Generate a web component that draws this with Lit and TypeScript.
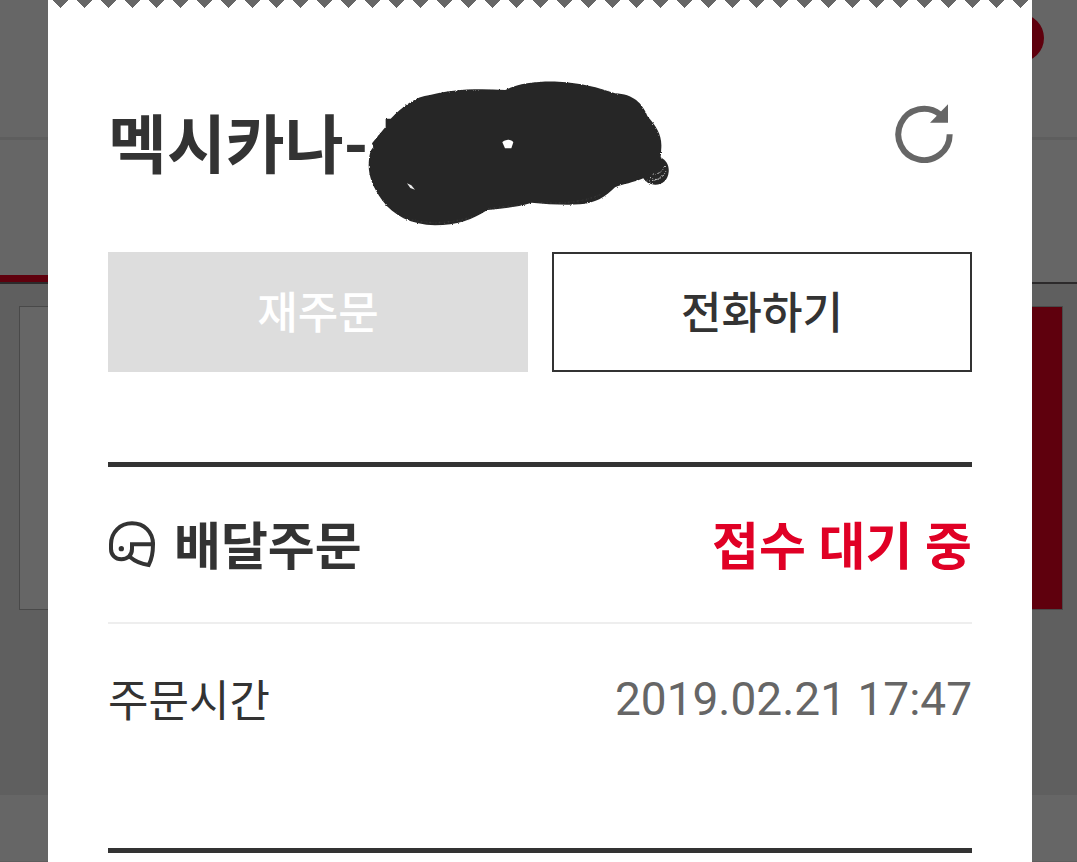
import { LitElement, html, css } from "lit";
import { customElement } from "lit/decorators.js";

/** Dimmed store page that stays visible behind the order sheet. */
@customElement("store-page")
class StorePage extends LitElement {
  static styles = css`
    :host {
      display: flex;
      flex-direction: column;
      background: #666;
      overflow: hidden;
    }
    .header {
      display: flex;
      justify-content: flex-end;
      height: 123px;
      padding: 14px 33px 0 0;
      border-bottom: 3px solid #5e5e5e;
    }
    .badge {
      width: 48px;
      height: 48px;
      border-radius: 50%;
      background: #5f000d;
    }
    .tabs {
      display: grid;
      grid-template-columns: 1fr 1fr;
      height: 142px;
      border-bottom: 2px solid #2c2a2b;
    }
    .tab.active {
      border-bottom: 7px solid #5f000d;
    }
    .content {
      padding: 22px 14px 185px 19px;
      background: #5f5f5f;
    }
    .card {
      display: grid;
      grid-template-columns: 3fr 1fr;
      height: 302px;
      border: 1px solid #494949;
      background: #666;
    }
    .action {
      background: #5f000d;
    }
    .footer {
      flex: 1;
      min-height: 66px;
      border-bottom: 1px solid #5e5e5e;
    }
  `;

  render() {
    return html`
      <div class="header"><span class="badge"></span></div>
      <div class="tabs"><div class="tab active"></div><div class="tab"></div></div>
      <div class="content">
        <div class="card"><div></div><div class="action"></div></div>
      </div>
      <div class="footer"></div>
    `;
  }
}

/** Receipt-like sheet with the state of one order. */
@customElement("order-sheet")
class OrderSheet extends LitElement {
  static styles = css`
    :host {
      display: block;
      box-sizing: border-box;
      background: #fff;
      color: #333;
    }
    .zigzag {
      height: 8px;
      background: conic-gradient(from -45deg at 12px 8px, #666 90deg, #fff 0) 0 0 / 24px 8px;
    }
    .body {
      padding: 72px 60px 0;
    }
    .title {
      display: flex;
      align-items: flex-start;
      height: 172px;
    }
    h1 {
      margin: 0;
      padding-top: 19px;
      font-size: 64px;
      line-height: 96px;
      font-weight: 700;
      white-space: nowrap;
      width: 260px;
    }
    .scribble {
      flex: none;
      width: 304px;
      height: 148px;
    }
    .refresh {
      margin: 24px 19px 0 auto;
      padding: 0;
      border: 0;
      background: none;
      cursor: pointer;
    }
    .refresh svg {
      display: block;
      width: 58px;
      height: 59px;
    }
    .actions {
      display: grid;
      grid-template-columns: 1fr 1fr;
      gap: 24px;
      margin-bottom: 90px;
    }
    .btn {
      height: 120px;
      padding: 4px 0 0;
      border: 2px solid #333;
      background: #fff;
      color: #333;
      font: inherit;
      font-size: 44px;
      font-weight: 500;
      line-height: 64px;
    }
    .btn:disabled {
      border-color: #ddd;
      background: #ddd;
      color: #fff;
    }
    .rows {
      border-top: 5px solid #333;
      border-bottom: 5px solid #333;
      padding-bottom: 74px;
    }
    .row {
      display: flex;
      align-items: center;
      justify-content: space-between;
      font-size: 44px;
      line-height: 64px;
      height: 150px;
    }
    .row.status {
      height: 155px;
      border-bottom: 2px solid #eee;
      font-size: 51px;
      font-weight: 700;
    }
    .kind {
      display: flex;
      align-items: center;
      gap: 18px;
      margin: 0;
      font: inherit;
    }
    .kind svg {
      width: 48px;
      height: 48px;
    }
    .label,
    .state {
      padding-top: 6px;
    }
    .state {
      color: #e00025;
    }
    .time {
      font-size: 46px;
      color: #666;
    }
  `;

  render() {
    return html`
      <div class="zigzag"></div>
      <div class="body">
        <div class="title">
          <h1>멕시카나-</h1>
          <svg class="scribble" viewBox="54 60 912 444" aria-hidden="true">
            <defs>
              <filter id="rough" x="-5%" y="-5%" width="110%" height="110%">
                <feTurbulence type="fractalNoise" baseFrequency="0.8" numOctaves="2" seed="4" />
                <feDisplacementMap in="SourceGraphic" scale="7" xChannelSelector="R" yChannelSelector="G" />
              </filter>
            </defs>
            <g fill="#262626">
              <path filter="url(#rough)" d="M66 250 L107 200 L107 176 L122 176 C160 138 196 110 240 105 C300 88 380 84 466 90 C510 68 570 63 625 65 C690 68 745 82 795 100 C850 102 877 130 892 168 C920 200 936 225 934 262 L932 292 C950 302 958 318 956 336 C954 360 938 374 916 374 C898 374 886 366 880 355 C850 368 820 372 795 382 C765 412 735 430 690 433 C640 436 590 432 545 428 C505 442 460 444 412 450 C370 478 320 496 255 496 C185 494 130 468 96 420 C70 384 56 350 56 315 C57 290 60 270 70 262 Z" />
              <path fill="#fff" d="M457 247 Q460 241 474 239 Q486 239 490 247 L484 265 L465 265 Z" />
              <path fill="#eee" d="M171 370 L184 376 L195 389 L181 384 Z" />
            </g>
            <g fill="none" stroke="#fff" stroke-width="3" filter="url(#rough)">
              <path stroke-dasharray="3 5 2 7 4 4" d="M900 352 Q932 372 950 328 M888 362 Q922 366 936 346 M908 342 Q934 344 944 318" />
              <path opacity=".35" stroke-width="2" stroke-dasharray="2 9 3 5 1 7" d="M562 428 Q680 436 750 404 M420 446 L520 434 M150 470 Q250 506 370 470" />
            </g>
          </svg>
          <button class="refresh" type="button" aria-label="새로고침">
            <svg viewBox="45 41 174 177" aria-hidden="true">
              <path d="M209 132 A77 77 0 1 1 180 72" fill="none" stroke="#666" stroke-width="18" />
              <path d="M204 42 V97 H150 Z" fill="#666" />
            </svg>
          </button>
        </div>
        <div class="actions">
          <button class="btn" type="button" disabled>재주문</button>
          <button class="btn" type="button">전화하기</button>
        </div>
        <section class="rows">
          <div class="row status">
            <h2 class="kind">
              <svg viewBox="24 62 144 144" aria-hidden="true">
                <g fill="none" stroke="#333" stroke-width="12">
                  <path d="M159 132 C159 94 132 69 96 69 C60 69 33 96 33 132 V146 C33 164 46 177 64 177 C83 177 96 164 96 146 V132 H159 C159 160 155 178 146 194 C124 191 105 183 90 170" />
                </g>
                <circle cx="64" cy="145" r="8" fill="#333" />
              </svg>
              <span class="label">배달주문</span>
            </h2>
            <span class="state">접수 대기 중</span>
          </div>
          <div class="row">
            <span class="label">주문시간</span>
            <time class="time" datetime="2019-02-21T17:47">2019.02.21 17:47</time>
          </div>
        </section>
      </div>
    `;
  }
}

@customElement("app-root")
class AppRoot extends LitElement {
  static styles = css`
    :host {
      display: grid;
      grid-template-columns: minmax(0, 1fr);
      min-height: 100vh;
      font-family: Roboto, "Noto Sans CJK KR", sans-serif;
    }
    .backdrop,
    .sheet {
      grid-area: 1 / 1;
    }
    .sheet {
      position: relative;
      margin: 0 45px 0 48px;
    }
  `;

  render() {
    return html`
      <store-page class="backdrop"></store-page>
      <order-sheet class="sheet"></order-sheet>
    `;
  }
}
